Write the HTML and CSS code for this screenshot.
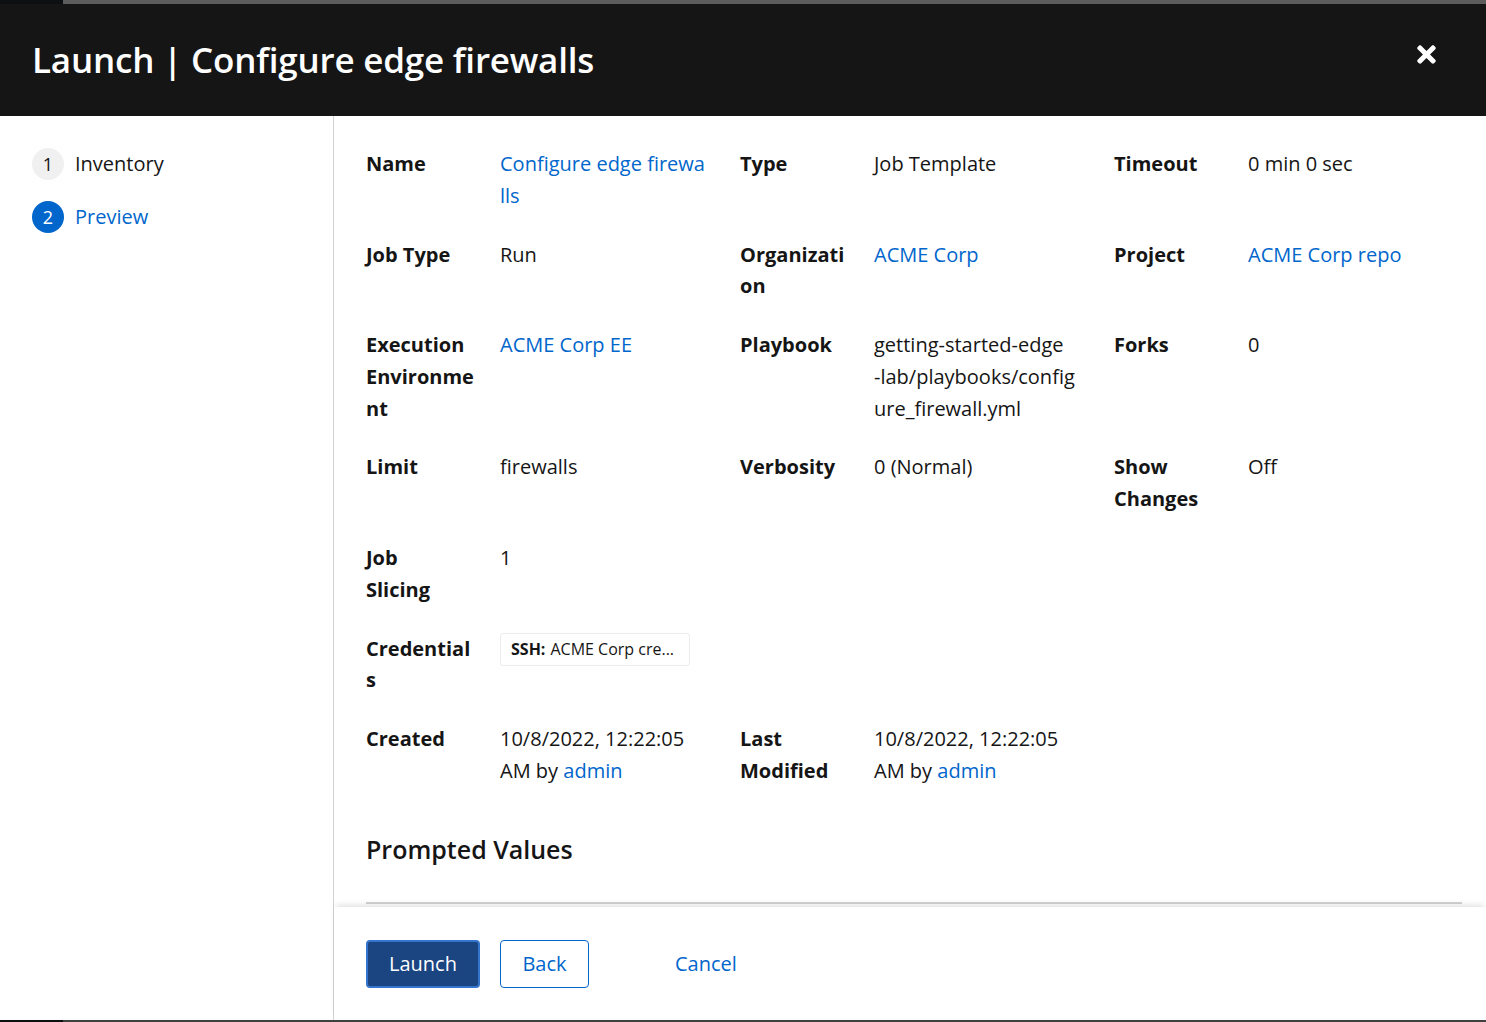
FILE: index.html
```html
<!DOCTYPE html>
<html lang="en">
<head>
<meta charset="utf-8">
<title>Launch | Configure edge firewalls</title>
<link rel="stylesheet" href="styles.css">
</head>
<body>
<div class="backdrop">
  <div class="strip strip-top"><span class="strip-dark"></span></div>
  <div class="modal">
    <header class="modal-header">
      <h1 class="modal-title">Launch | Configure edge firewalls</h1>
      <button class="close-btn" aria-label="Close">
        <svg viewBox="0 0 352 512" width="19" height="27" aria-hidden="true"><path fill="#fff" d="M242.72 256l100.07-100.07c12.28-12.28 12.28-32.19 0-44.48l-22.24-22.24c-12.28-12.28-32.19-12.28-44.48 0L176 189.28 75.93 89.21c-12.28-12.28-32.19-12.28-44.48 0L9.21 111.45c-12.28 12.28-12.28 32.19 0 44.48L109.28 256 9.21 356.07c-12.28 12.28-12.28 32.19 0 44.48l22.24 22.24c12.28 12.28 32.2 12.28 44.48 0L176 322.72l100.07 100.07c12.28 12.28 32.2 12.28 44.48 0l22.24-22.24c12.28-12.28 12.28-32.19 0-44.48L242.72 256z"/></svg>
      </button>
    </header>
    <div class="modal-body">
      <nav class="wizard-nav">
        <div class="nav-item"><span class="step-num">1</span><span class="step-label">Inventory</span></div>
        <div class="nav-item current"><span class="step-num">2</span><span class="step-label">Preview</span></div>
      </nav>
      <div class="wizard-main">
        <div class="wizard-content">
          <dl class="details">
            <div class="group"><dt>Name</dt><dd><a class="link">Configure edge firewa<br>lls</a></dd></div>
            <div class="group"><dt>Type</dt><dd>Job Template</dd></div>
            <div class="group"><dt>Timeout</dt><dd>0 min 0 sec</dd></div>

            <div class="group"><dt>Job Type</dt><dd>Run</dd></div>
            <div class="group"><dt>Organizati<br>on</dt><dd><a class="link">ACME Corp</a></dd></div>
            <div class="group"><dt>Project</dt><dd><a class="link">ACME Corp repo</a></dd></div>

            <div class="group"><dt>Execution<br>Environme<br>nt</dt><dd><a class="link">ACME Corp EE</a></dd></div>
            <div class="group"><dt>Playbook</dt><dd>getting-started-edge<br>-lab/playbooks/config<br>ure_firewall.yml</dd></div>
            <div class="group"><dt>Forks</dt><dd>0</dd></div>

            <div class="group"><dt>Limit</dt><dd>firewalls</dd></div>
            <div class="group"><dt>Verbosity</dt><dd>0 (Normal)</dd></div>
            <div class="group"><dt>Show<br>Changes</dt><dd>Off</dd></div>

            <div class="group"><dt>Job<br>Slicing</dt><dd>1</dd></div>

            <div class="group full"><dt>Credential<br>s</dt><dd><span class="chip"><b>SSH:</b> ACME Corp cre...</span></dd></div>

            <div class="group"><dt>Created</dt><dd>10/8/2022, 12:22:05<br>AM by <a class="link">admin</a></dd></div>
            <div class="group"><dt>Last<br>Modified</dt><dd>10/8/2022, 12:22:05<br>AM by <a class="link">admin</a></dd></div>
          </dl>
          <h2 class="section-title">Prompted Values</h2>
          <div class="divider"></div>
        </div>
        <footer class="wizard-footer">
          <button class="btn btn-primary">Launch</button>
          <button class="btn btn-secondary">Back</button>
          <button class="btn btn-link">Cancel</button>
        </footer>
      </div>
    </div>
  </div>
  <div class="strip strip-bottom"><span class="strip-dark"></span></div>
</div>
</body>
</html>
```

FILE: styles.css
```css
* { box-sizing: border-box; }
html, body { margin: 0; padding: 0; }
body {
  font-family: "Open Sans", "Liberation Sans", sans-serif;
  color: #151515;
  background: #4a4a4a;
  overflow: hidden;
}
.backdrop {
  width: 1486px;
  height: 1022px;
  display: flex;
  flex-direction: column;
}
.strip { display: flex; flex: none; }
.strip-top { height: 4px; background: #5c5c5c; }
.strip-bottom { height: 2px; background: #404040; }
.strip-dark { width: 63px; background: #0e0f11; }

.modal {
  flex: 1;
  display: flex;
  flex-direction: column;
  background: #fff;
  min-height: 0;
}
.modal-header {
  flex: none;
  height: 112px;
  background: #151515;
  display: flex;
  align-items: center;
  justify-content: space-between;
  padding: 0 50px 0 32px;
}
.modal-title {
  margin: 0;
  color: #fff;
  font-family: "Open Sans", sans-serif;
  font-weight: 600;
  font-size: 35px;
  letter-spacing: -0.2px;
  line-height: 1.2;
}
.close-btn {
  background: none;
  border: 0;
  padding: 0;
  display: flex;
  cursor: pointer;
  position: relative;
  top: -6px;
}

.modal-body {
  flex: 1;
  display: flex;
  min-height: 0;
}
.wizard-nav {
  flex: none;
  width: 334px;
  border-right: 1px solid #d2d2d2;
  padding: 32px 0 0 32px;
  display: flex;
  flex-direction: column;
  gap: 21px;
}
.nav-item {
  display: flex;
  align-items: center;
  gap: 11px;
  height: 32px;
  font-size: 20px;
  line-height: 1;
}
.step-num {
  width: 32px;
  height: 32px;
  border-radius: 50%;
  background: #f0f0f0;
  color: #151515;
  display: flex;
  align-items: center;
  justify-content: center;
  font-size: 18px;
}
.nav-item.current .step-num { background: #0066cc; color: #fff; }
.nav-item.current .step-label { color: #0066cc; }

.wizard-main {
  flex: 1;
  display: flex;
  flex-direction: column;
  min-width: 0;
}
.wizard-content {
  flex: 1;
  overflow: hidden;
  padding: 32px 24px 0 32px;
}
.details {
  margin: 0;
  display: grid;
  grid-template-columns: repeat(3, 350px);
  column-gap: 24px;
  row-gap: 27.2px;
  font-size: 20px;
  line-height: 31.7px;
}
.group {
  display: grid;
  grid-template-columns: 110px 216px;
  column-gap: 24px;
}
.group.full { grid-column: 1 / -1; grid-template-columns: 110px 1fr; }
dt { font-weight: 700; white-space: nowrap; }
dd { margin: 0; white-space: nowrap; }
.link { color: #0066cc; text-decoration: none; }
.chip {
  display: inline-flex;
  align-items: center;
  height: 33px;
  width: 190px;
  padding: 0 10px;
  border: 1px solid #ececec;
  border-radius: 3px;
  font-size: 16px;
  line-height: 1;
  vertical-align: top;
}
.chip b { font-weight: 700; margin-right: 5px; }
.section-title {
  margin: 45px 0 0 0;
  font-size: 25px;
  font-weight: 600;
  line-height: 34px;
  letter-spacing: 0;
}
.divider {
  margin-top: 36px;
  height: 2px;
  background: #d2d2d2;
}
.wizard-footer {
  flex: none;
  height: 113px;
  display: flex;
  align-items: center;
  padding: 0 32px;
  box-shadow: 0 -4px 6px -2px rgba(3, 3, 3, 0.12);
  position: relative;
  background: #fff;
}
.btn {
  font-family: "Open Sans", sans-serif;
  font-size: 20px;
  height: 48px;
  border-radius: 4px;
  padding: 0 20px;
  cursor: pointer;
  background: none;
}
.btn-primary {
  width: 114px;
  background: #1a4580;
  color: #fff;
  border: 2px solid #3574cc;
}
.btn-secondary {
  width: 89px;
  margin-left: 20px;
  color: #0066cc;
  border: 1px solid #0066cc;
}
.btn-link {
  margin-left: 66px;
  border: 0;
  color: #0066cc;
}
```
